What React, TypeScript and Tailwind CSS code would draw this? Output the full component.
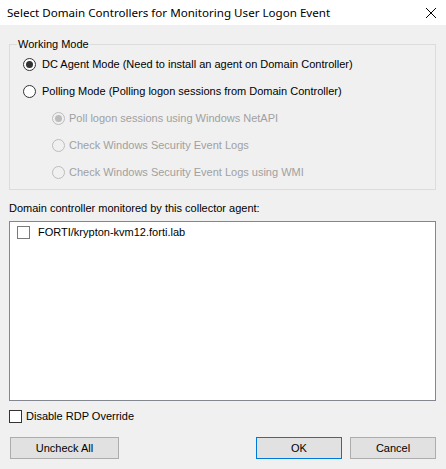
import { useState } from "react"

const font = { fontFamily: '"Liberation Sans", Arial, sans-serif' }

function Radio({ checked, disabled }: { checked?: boolean; disabled?: boolean }) {
  return (
    <span
      className={
        "flex h-[13px] w-[13px] shrink-0 items-center justify-center rounded-full border " +
        (disabled ? "border-[#bcbcbc] bg-[#f0f0f0]" : "border-[#333333] bg-white")
      }
    >
      {checked && (
        <span className={"h-[7px] w-[7px] rounded-full " + (disabled ? "bg-[#bcbcbc]" : "bg-[#333333]")} />
      )}
    </span>
  )
}

function Check({ dark }: { dark?: boolean }) {
  return (
    <span
      className={
        "h-[13px] w-[13px] shrink-0 border bg-white " + (dark ? "border-[#333333]" : "border-[#7a7a7a]")
      }
    />
  )
}

function Row({ children, indent, disabled }: { children: React.ReactNode; indent?: boolean; disabled?: boolean }) {
  return (
    <div
      className={
        "flex h-[27px] items-center " +
        (indent ? "pl-[42px] gap-[4px] " : "pl-[13px] gap-[6px] ") +
        (disabled ? "text-[#a0a0a0]" : "text-black")
      }
    >
      {children}
    </div>
  )
}

function App() {
  const [mode] = useState("dc")

  return (
    <div className="h-[469px] w-[446px] bg-[#f0f0f0] text-[11px] text-black" style={font}>
      <header className="flex h-[25px] items-center justify-between bg-white pl-[7px] pr-[8px]">
        <span className="text-[11.6px] text-black" style={{ fontFamily: '"Noto Sans", "Open Sans", sans-serif' }}>
          Select Domain Controllers for Monitoring User Logon Event
        </span>
        <svg width="12" height="12" viewBox="0 0 12 12" className="mr-[1px]">
          <path d="M1 1 L11 11 M11 1 L1 11" stroke="#000" strokeWidth="1" fill="none" />
        </svg>
      </header>

      <div className="pl-[9px] pr-[10px]">
        <div className="relative mt-[19px] h-[146px] border border-[#dcdcdc] pt-[6px]">
          <span className="absolute -top-[7px] left-[7px] bg-[#f0f0f0] px-[1px] leading-[13px]">Working Mode</span>
          <Row>
            <Radio checked={mode === "dc"} />
            <span>DC Agent Mode (Need to install an agent on Domain Controller)</span>
          </Row>
          <Row>
            <Radio checked={mode === "poll"} />
            <span>Polling Mode (Polling logon sessions from Domain Controller)</span>
          </Row>
          <Row indent disabled>
            <Radio checked disabled />
            <span>Poll logon sessions using Windows NetAPI</span>
          </Row>
          <Row indent disabled>
            <Radio disabled />
            <span>Check Windows Security Event Logs</span>
          </Row>
          <Row indent disabled>
            <Radio disabled />
            <span>Check Windows Security Event Logs using WMI</span>
          </Row>
        </div>

        <div className="mt-[12px] leading-[13px]">Domain controller monitored by this collector agent:</div>

        <div className="mt-[6px] h-[180px] border border-[#828790] bg-white pl-[7px] pt-[4px]">
          <div className="flex items-center gap-[8px] leading-[13px]">
            <Check />
            <span>FORTI/krypton-kvm12.forti.lab</span>
          </div>
        </div>

        <div className="mt-[9px] flex items-center gap-[4px] leading-[13px]">
          <Check dark />
          <span>Disable RDP Override</span>
        </div>

        <div className="mt-[14px] flex items-center">
          <button className="ml-[1px] h-[22px] w-[109px] border border-[#adadad] bg-[#e1e1e1] text-[11px]">
            Uncheck All
          </button>
          <button className="ml-auto h-[22px] w-[86px] border border-[#0078d7] bg-[#e1e1e1] text-[11px]">
            OK
          </button>
          <button className="ml-[8px] h-[22px] w-[86px] border border-[#adadad] bg-[#e1e1e1] text-[11px]">
            Cancel
          </button>
        </div>
      </div>
    </div>
  )
}

export default App
